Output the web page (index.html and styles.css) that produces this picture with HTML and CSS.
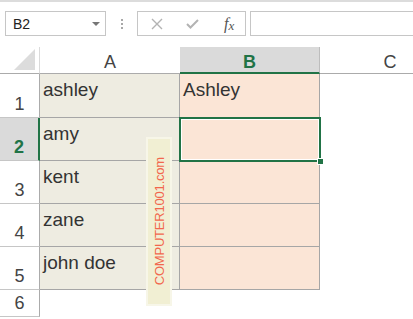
FILE: index.html
```html
<!DOCTYPE html>
<html lang="en">
<head>
  <meta charset="UTF-8">
  <title>Proper case - Excel</title>
  <link rel="stylesheet" href="styles.css">
</head>
<body>

<div class="toolbar">
  <div class="namebox">
    <span class="ref">B2</span>
    <span class="caret"></span>
  </div>
  <div class="grip"><i></i><i></i><i></i></div>
  <div class="fxbox">
    <svg class="icon" width="12" height="12" viewBox="0 0 12 12">
      <path d="M1 1 L11 11 M11 1 L1 11" stroke="#b3b3b3" stroke-width="1.4" fill="none"/>
    </svg>
    <svg class="icon" width="13" height="10" viewBox="0 0 13 10">
      <path d="M1 5 L4.5 8.5 L12 1" stroke="#b3b3b3" stroke-width="2" fill="none"/>
    </svg>
    <span class="fx">f<span class="x">x</span></span>
  </div>
  <div class="formula"></div>
</div>

<div class="sheet">
  <!-- header row -->
  <div class="corner">
    <svg width="21" height="21" viewBox="0 0 21 21"><polygon points="21,0 21,21 0,21" fill="#dcdcdc"/></svg>
  </div>
  <div class="colhead">A</div>
  <div class="colhead active">B</div>
  <div class="colhead last">C</div>

  <!-- rows -->
  <div class="rowhead">1</div>
  <div class="cell name">ashley</div>
  <div class="cell proper">Ashley</div>
  <div class="blank"></div>

  <div class="rowhead active">2</div>
  <div class="cell name">amy</div>
  <div class="cell proper"></div>
  <div class="blank"></div>

  <div class="rowhead">3</div>
  <div class="cell name">kent</div>
  <div class="cell proper"></div>
  <div class="blank"></div>

  <div class="rowhead">4</div>
  <div class="cell name">zane</div>
  <div class="cell proper"></div>
  <div class="blank"></div>

  <div class="rowhead">5</div>
  <div class="cell name">john doe</div>
  <div class="cell proper"></div>
  <div class="blank"></div>

  <div class="rowhead">6</div>
  <div class="blank"></div>
  <div class="blank"></div>
  <div class="blank"></div>

  <div class="selection"><span class="handle"></span></div>
  <div class="stamp"><span>COMPUTER1001.com</span></div>
</div>

</body>
</html>
```

FILE: styles.css
```css
body {
  margin: 0;
  background: #fff;
  font-family: 'Liberation Sans', Arial, sans-serif;
  color: #333;
  overflow: hidden;
}

/* formula bar */
.toolbar {
  display: flex;
  align-items: flex-start;
  height: 47px;
  padding-top: 9px;
  border-top: 2px solid #dcdcdc;
  box-sizing: border-box;
}
.namebox {
  display: flex;
  align-items: center;
  justify-content: space-between;
  margin-left: 5px;
  width: 101px;
  height: 25px;
  border: 1px solid #c6c6c6;
  box-sizing: border-box;
  padding: 0 5px 0 7px;
}
.ref {
  font-size: 14px;
  color: #222;
}
.caret {
  width: 0;
  height: 0;
  border-left: 4px solid transparent;
  border-right: 4px solid transparent;
  border-top: 4px solid #767676;
}
.grip {
  display: flex;
  flex-direction: column;
  gap: 2px;
  margin: 8px 14px 0 15px;
}
.grip i {
  display: block;
  width: 2px;
  height: 2px;
  background: #a8a8a8;
}
.fxbox {
  display: flex;
  align-items: center;
  width: 109px;
  height: 25px;
  border: 1px solid #c6c6c6;
  box-sizing: border-box;
  padding-left: 13px;
}
.fxbox .icon {
  margin-right: 23px;
}
.fxbox .icon + .icon {
  margin-right: 25px;
}
.fx {
  font-family: 'Liberation Serif', 'Times New Roman', serif;
  font-style: italic;
  font-size: 16px;
  color: #555;
}
.fx .x {
  font-size: 13px;
  position: relative;
  top: 1px;
}
.formula {
  flex: 1;
  height: 25px;
  margin-left: 4px;
  border: 1px solid #c6c6c6;
  border-right: none;
  box-sizing: border-box;
}

/* grid - column C is cut off by the window, as in Excel */
.sheet {
  position: relative;
  overflow: hidden;
  display: grid;
  grid-template-columns: 40px 140px 140px 140px;
  grid-template-rows: 27px 44px 43px 43px 43px 43px 27px;
}
.sheet > div {
  box-sizing: border-box;
}
.corner {
  border-right: 1px solid #dadada;
  border-bottom: 1px solid #ababab;
  display: flex;
  align-items: flex-end;
  justify-content: flex-end;
  padding: 0 4px 3px 0;
}
.corner svg {
  display: block;
}
.colhead {
  text-align: center;
  font-size: 18px;
  line-height: 22px;
  padding-top: 4px;
  color: #444;
  border-bottom: 1px solid #ababab;
}
.colhead.active {
  background: #dadada;
  color: #217346;
  font-weight: bold;
  border-bottom: 2px solid #217346;
  border-right: 1px solid #bdbdbd;
}
.rowhead {
  display: flex;
  align-items: flex-end;
  justify-content: center;
  font-size: 18px;
  line-height: 22px;
  padding-bottom: 2px;
  color: #444;
  border-right: 1px solid #ababab;
  border-bottom: 1px solid #c6c6c6;
}
.rowhead.active {
  background: #dadada;
  color: #217346;
  font-weight: bold;
  border-right: 2px solid #217346;
}
.cell {
  font-size: 19px;
  line-height: 22px;
  padding: 5px 0 0 3px;
  border-right: 1px solid #a6a6a6;
  border-bottom: 1px solid #a6a6a6;
  color: #333;
}
.cell.name {
  background: #eeece1;
}
.cell.proper {
  background: #fbe5d6;
}

/* overlays */
.selection {
  position: absolute;
  left: 179px;
  top: 70px;
  width: 142px;
  height: 45px;
  border: 2px solid #217346;
  box-shadow: inset 0 0 0 1px #fff;
  box-sizing: border-box;
}
.handle {
  position: absolute;
  right: -5px;
  bottom: -5px;
  width: 5px;
  height: 5px;
  background: #217346;
  border: 1px solid #fff;
}
.stamp {
  position: absolute;
  left: 146px;
  top: 90px;
  width: 26px;
  height: 169px;
  background: #f1efd3;
  border: 2px solid #f7f6e8;
  display: flex;
  align-items: center;
  justify-content: center;
}
.stamp span {
  writing-mode: vertical-rl;
  transform: rotate(180deg);
  font-size: 13px;
  letter-spacing: -0.2px;
  color: #f2674d;
  white-space: nowrap;
}
```
